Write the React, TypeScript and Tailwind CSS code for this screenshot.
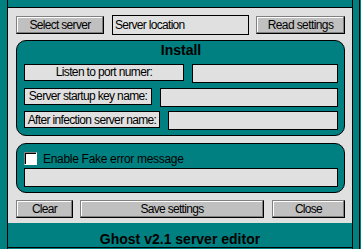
// Ghost v2.1 server editor — VB-style skinned form
const font = "font-['Liberation_Sans',Arial,sans-serif]";

function Btn({ label, w, track = "tracking-[-0.7px]" }: { label: string; w: string; track?: string }) {
  return (
    <div
      className={`${w} h-[18px] flex items-center justify-center bg-[#c0c0c0] border border-t-[#808080] border-l-[#808080] border-b-black border-r-black shadow-[inset_-1px_-1px_0_#808080,inset_1px_1px_0_#ffffff] text-[12px] leading-[14px] ${track}`}
    >
      {label}
    </div>
  );
}

function Field({ value = "", className = "" }: { value?: string; className?: string }) {
  return (
    <div className={`h-[19px] bg-[#e0e0e0] border border-black flex items-center pl-[2px] text-[12px] leading-[14px] tracking-[-0.7px] ${className}`}>
      {value}
    </div>
  );
}

function Row({ label, w }: { label: string; w: string }) {
  return (
    <div className="h-[24px] flex items-start gap-[8px]">
      <div className={`${w} h-[17px] bg-[#e0e0e0] border border-black flex items-center justify-center text-[12px] leading-[14px] tracking-[-0.65px]`}>
        {label}
      </div>
      <Field className="flex-1" />
    </div>
  );
}

export default function App() {
  return (
    <div className={`w-[361px] h-[249px] bg-[#008080] flex text-black ${font}`}>
      <div className="w-[7px]" />
      <div className="w-[346px] flex flex-col border-l border-r border-black">
        <div className="h-[7px]" />
        <div className="border-t border-black h-[216px] bg-[#e0e0e0] pt-[7px] pl-[8px] pr-[7px] flex flex-col">
          {/* top row */}
          <div className="h-[20px] flex items-center">
            <Btn label="Select server" w="w-[88px]" />
            <Field value="Server location" className="w-[137px] h-[20px] ml-[8px]" />
            <div className="ml-[7px]">
              <Btn label="Read settings" w="w-[89px]" track="tracking-[-0.6px]" />
            </div>
          </div>

          {/* install panel */}
          <div className="mt-[5px] h-[96px] rounded-[10px] bg-[#008080] border border-black pl-[7px] pr-[6px] flex flex-col">
            <div className="h-[23px] pt-[1px] text-center text-[14px] leading-[16px] font-bold">Install</div>
            <Row label="Listen to port numer:" w="w-[160px]" />
            <Row label="Server startup key name:" w="w-[128px]" />
            <Row label="After infection server name:" w="w-[136px]" />
          </div>

          {/* fake error panel */}
          <div className="mt-[7px] h-[50px] rounded-[10px] bg-[#008080] border border-black pt-[8px] pl-[7px] pr-[6px] flex flex-col">
            <div className="h-[13px] flex items-center gap-[6px]">
              <div className="w-[13px] h-[13px] bg-white border border-t-[#808080] border-l-[#808080] border-b-white border-r-white shadow-[inset_1px_1px_0_#000]" />
              <span className="text-[12px] leading-[14px] tracking-[-0.3px]">Enable Fake error message</span>
            </div>
            <Field className="mt-[3px]" />
          </div>

          {/* buttons */}
          <div className="mt-[7px] flex">
            <Btn label="Clear" w="w-[57px]" />
            <div className="ml-[7px]">
              <Btn label="Save settings" w="w-[184px]" />
            </div>
            <div className="ml-[8px]">
              <Btn label="Close" w="w-[73px]" />
            </div>
          </div>
        </div>
        <div className="h-[24px] pt-[8px] text-center text-[14px] leading-[16px] font-bold">Ghost v2.1 server editor</div>
        <div className="border-t border-black h-[1px]" />
      </div>
      <div className="w-[6px]" />
      <div className="w-px bg-black" />
    </div>
  );
}
